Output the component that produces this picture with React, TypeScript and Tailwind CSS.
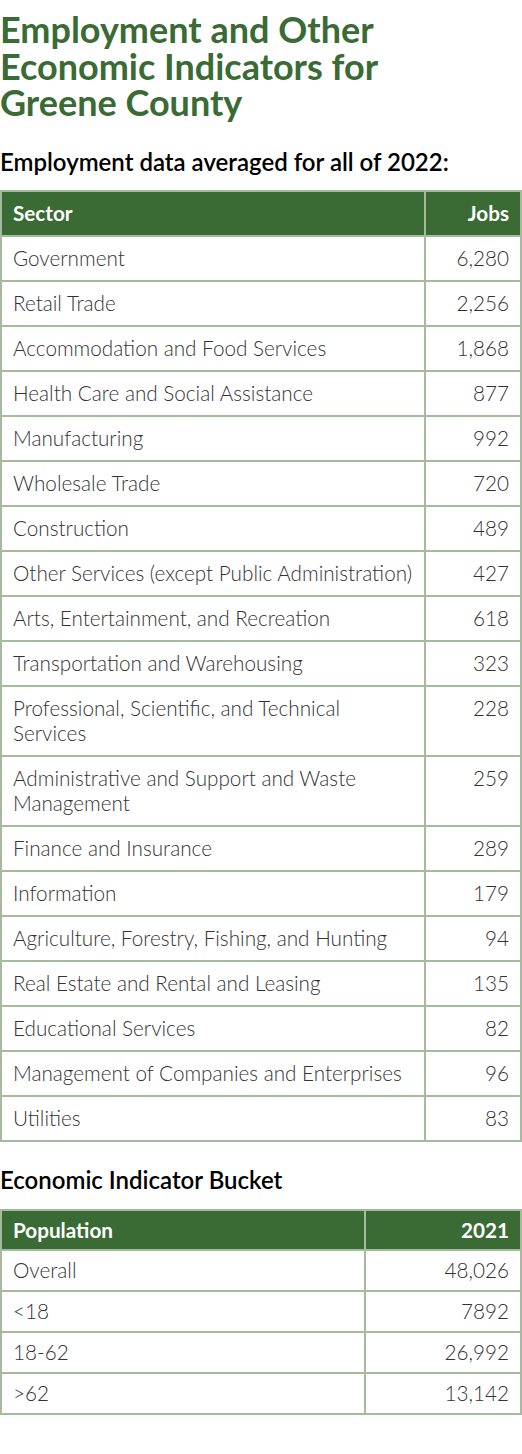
const jobs = [
  ['Government', '6,280'],
  ['Retail Trade', '2,256'],
  ['Accommodation and Food Services', '1,868'],
  ['Health Care and Social Assistance', '877'],
  ['Manufacturing', '992'],
  ['Wholesale Trade', '720'],
  ['Construction', '489'],
  ['Other Services (except Public Administration)', '427'],
  ['Arts, Entertainment, and Recreation', '618'],
  ['Transportation and Warehousing', '323'],
  ['Professional, Scientific, and Technical Services', '228'],
  ['Administrative and Support and Waste Management', '259'],
  ['Finance and Insurance', '289'],
  ['Information', '179'],
  ['Agriculture, Forestry, Fishing, and Hunting', '94'],
  ['Real Estate and Rental and Leasing', '135'],
  ['Educational Services', '82'],
  ['Management of Companies and Enterprises', '96'],
  ['Utilities', '83'],
]

const population = [
  ['Overall', '48,026'],
  ['<18', '7892'],
  ['18-62', '26,992'],
  ['>62', '13,142'],
]

const cell = 'border-2 border-[#a6bb9e] pl-[11px] pr-[10px] align-top'
const num = 'border-2 border-[#a6bb9e] pl-[11px] pr-[11px] align-top text-right'

export default function App() {
  return (
    <div className="font-['Lato',sans-serif] bg-white w-[522px] pt-[11px] pb-10">
      <h1 className="max-w-[440px] text-[#3a6b35] font-bold text-[36px] leading-[36.5px]">
        Employment and Other Economic Indicators for Greene County
      </h1>

      <h2 className="mt-[26px] text-black font-semibold text-[24px] leading-[29px]">
        Employment data averaged for all of 2022:
      </h2>

      {/* jobs by sector */}
      <table className="mt-[14px] w-full border-collapse text-[20.7px] leading-[25px]">
        <thead>
          <tr className="bg-[#3a6b35] text-white font-bold">
            <th className={`${cell} py-[9px] text-left`}>Sector</th>
            <th className={`${num} py-[9px] w-[96px]`}>Jobs</th>
          </tr>
        </thead>
        <tbody className="text-[#333] font-light">
          {jobs.map(([name, n]) => (
            <tr key={name}>
              <td className={`${cell} py-[9px]`}>{name}</td>
              <td className={`${num} py-[9px]`}>{n}</td>
            </tr>
          ))}
        </tbody>
      </table>

      <h2 className="mt-[23px] text-black font-semibold text-[24px] leading-[29px]">
        Economic Indicator Bucket
      </h2>

      <table className="mt-[15px] w-full border-collapse text-[20.7px] leading-[25px]">
        <thead>
          <tr className="bg-[#3a6b35] text-white font-bold">
            <th className={`${cell} pt-[7px] pb-[6px] text-left`}>Population</th>
            <th className={`${num} pt-[7px] pb-[6px] w-[156px]`}>2021</th>
          </tr>
        </thead>
        <tbody className="text-[#333] font-light">
          {population.map(([name, n]) => (
            <tr key={name}>
              <td className={`${cell} py-[7px]`}>{name}</td>
              <td className={`${num} py-[7px]`}>{n}</td>
            </tr>
          ))}
        </tbody>
      </table>
    </div>
  )
}
